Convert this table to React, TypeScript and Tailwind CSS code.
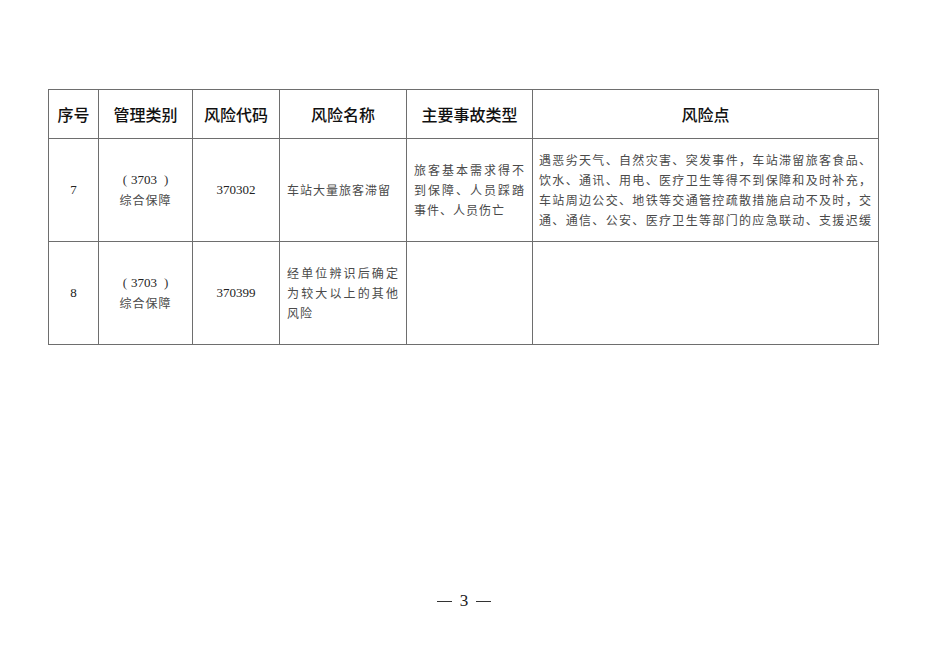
const cjk = "font-['Noto_Sans_CJK_SC','Noto_Sans',sans-serif]"
const serif = "font-['Liberation_Serif','Noto_Sans_CJK_SC',serif]"

const headers = ["序号", "管理类别", "风险代码", "风险名称", "主要事故类型", "风险点"]
const widths = ["w-[50px]", "w-[94px]", "w-[87px]", "w-[127px]", "w-[126px]", "w-[346px]"]

interface Row {
  no: string
  code: string
  name: string[]
  accident: string[]
  points: string[]
}

const rows: Row[] = [
  {
    no: "7",
    code: "370302",
    name: ["车站大量旅客滞留"],
    accident: ["旅客基本需求得不", "到保障、人员踩踏", "事件、人员伤亡"],
    points: [
      "遇恶劣天气、自然灾害、突发事件，车站滞留旅客食品、",
      "饮水、通讯、用电、医疗卫生等得不到保障和及时补充，",
      "车站周边公交、地铁等交通管控疏散措施启动不及时，交",
      "通、通信、公安、医疗卫生等部门的应急联动、支援迟缓",
    ],
  },
  {
    no: "8",
    code: "370399",
    name: ["经单位辨识后确定", "为较大以上的其他", "风险"],
    accident: [],
    points: [],
  },
]

// each line is laid out on its own, full lines are stretched to the cell width
function Lines({ lines, stretch }: { lines: string[]; stretch: boolean }) {
  return (
    <div className={`${cjk} text-[12px] leading-[20px] tracking-[1px] text-[#4a4a4a]`}>
      {lines.map((l, i) => {
        const justify = stretch && (i < lines.length - 1 || lines.length > 1 && l.length >= lines[0].length)
        return (
          <div key={i} className={justify ? "text-justify [text-align-last:justify]" : "text-left"}>
            {l}
          </div>
        )
      })}
    </div>
  )
}

export default function App() {
  return (
    <div className="w-[950px] h-[672px] bg-white">
      <div className="pt-[89px] pl-[48px]">
        <table className="w-[831px] table-fixed border-collapse border border-[#6e6e6e]">
          <thead>
            <tr className="h-[49px]">
              {headers.map((h, i) => (
                <th
                  key={h}
                  className={`${widths[i]} border border-[#6e6e6e] p-0 text-center align-middle ${cjk} text-[16px] font-medium text-[#111]`}
                >
                  {h}
                </th>
              ))}
            </tr>
          </thead>
          <tbody>
            {rows.map((r) => (
              <tr key={r.no} className="h-[103px]">
                <td className={`border border-[#6e6e6e] text-center align-middle ${serif} text-[13px] text-[#222]`}>
                  {r.no}
                </td>
                <td className="border border-[#6e6e6e] text-center align-middle">
                  <div className={`flex justify-center items-center ${serif} text-[13px] leading-[20px] text-[#222]`}>
                    <span className="mr-[4px] text-[#333]">(</span>
                    <span>3703</span>
                    <span className="ml-[7px] text-[#333]">)</span>
                  </div>
                  <div className={`${cjk} text-[12px] leading-[20px] tracking-[1px] text-[#4a4a4a]`}>综合保障</div>
                </td>
                <td className={`border border-[#6e6e6e] text-center align-middle ${serif} text-[13px] text-[#222]`}>
                  {r.code}
                </td>
                <td className="border border-[#6e6e6e] px-[7px] align-middle">
                  <Lines lines={r.name} stretch={r.name.length > 1} />
                </td>
                <td className="border border-[#6e6e6e] px-[7px] align-middle">
                  <Lines lines={r.accident} stretch />
                </td>
                <td className="border border-[#6e6e6e] px-[6px] align-middle">
                  <Lines lines={r.points} stretch />
                </td>
              </tr>
            ))}
          </tbody>
        </table>
      </div>
      <div className={`mt-[244px] pr-[22px] flex justify-center items-center gap-[8px] ${serif} text-[17px] leading-[24px] text-[#222]`}>
        <span className="w-[15px] h-px bg-[#333]" />
        <span>3</span>
        <span className="w-[15px] h-px bg-[#333]" />
      </div>
    </div>
  )
}
